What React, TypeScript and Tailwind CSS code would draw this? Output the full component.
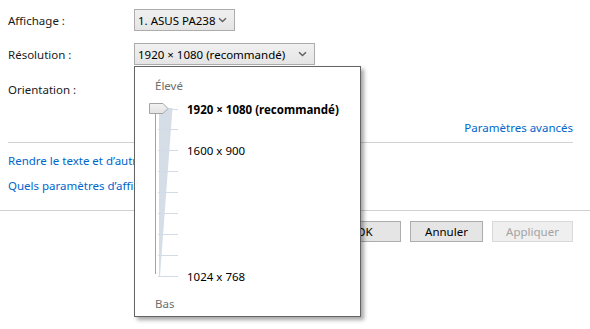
import React from "react";

const Chevron = () => (
  <svg width="9" height="6" viewBox="0 0 9 6" className="shrink-0">
    <path d="M1 1.2 L4.5 4.6 L8 1.2" fill="none" stroke="#606060" strokeWidth="1.4" />
  </svg>
);

const Select = ({ text, w }: { text: string; w: string }) => (
  <div
    className={`flex h-[22px] ${w} items-center justify-between whitespace-nowrap border border-[#acacac] bg-gradient-to-b from-[#f0f0f0] to-[#e5e5e5] pl-[3px] pr-[7px] text-[#000]`}
  >
    <span className="pt-[1px]">{text}</span>
    <Chevron />
  </div>
);

const Slider = () => {
  const ticks = Array.from({ length: 9 }, (_, i) => 7.5 + i * 20.9);
  return (
    <svg width="32" height="180" viewBox="0 0 32 180" className="shrink-0">
      <polygon points="12,7 25.5,7 13,175 12,175" fill="#d5dee7" />
      {ticks.map((y, i) => (
        <line key={i} x1="11" x2="31" y1={Math.round(y) + 0.5} y2={Math.round(y) + 0.5} stroke="#d3dce6" strokeWidth="1" />
      ))}
      <line x1="8.5" x2="8.5" y1="13" y2="173" stroke="#a2a2a2" strokeWidth="1" />
      <defs>
        <linearGradient id="th" x1="0" y1="0" x2="0" y2="1">
          <stop offset="0" stopColor="#f2f2f2" />
          <stop offset="1" stopColor="#e2e2e2" />
        </linearGradient>
      </defs>
      <path d="M2.5 2.5 H16 L21 7.5 L16 12.5 H2.5 Z" fill="url(#th)" stroke="#a4a4a4" strokeWidth="1" />
    </svg>
  );
};

export default function App() {
  return (
    <div
      className="relative h-[329px] w-[590px] overflow-hidden bg-white text-[11.5px] leading-[16px] text-[#1a1a1a]"
      style={{ fontFamily: '"Segoe UI", "Noto Sans", sans-serif' }}
    >
      <div className="flex flex-col pt-[9px]">
        <div className="flex items-center pl-[8px]">
          <span className="w-[126px] pt-[2px]">Affichage :</span>
          <Select text="1. ASUS PA238" w="w-[101px]" />
        </div>
        <div className="mt-[12px] flex items-center pl-[8px]">
          <span className="w-[126px] pt-[2px]">Résolution :</span>
          <Select text="1920 × 1080 (recommandé)" w="w-[181px]" />
        </div>
        <div className="mt-[12px] flex h-[22px] items-center pl-[8px]">
          <span className="w-[126px] pt-[3px]">Orientation :</span>
        </div>
        <div className="mt-[21px] flex justify-end pr-[17px] text-[#0066cc]">Paramètres avancés</div>
        <div className="ml-[8px] mr-[17px] mt-[6px] border-t border-[#d2d2d2]" />
        <div className="ml-[8px] mt-[10px] w-[126px] overflow-hidden whitespace-nowrap text-[#0066cc]">Rendre le texte et d’autres éléments plus grands ou plus petits</div>
        <div className="ml-[8px] mt-[9px] w-[126px] overflow-hidden whitespace-nowrap text-[#0066cc]">Quels paramètres d’affichage dois-je choisir ?</div>
        <div className="mt-[16px] border-t border-[#d2d2d2]" />
        <div className="mt-[10px] flex justify-end gap-[9px] pr-[17px]">
          <div className="flex h-[21px] w-[73px] items-center justify-center border border-[#adadad] bg-[#e5e5e5] text-[#000]">OK</div>
          <div className="flex h-[21px] w-[73px] items-center justify-center border border-[#adadad] bg-[#e5e5e5] text-[#000]">Annuler</div>
          <div className="flex h-[21px] w-[81px] items-center justify-center border border-[#d9d9d9] bg-[#efefef] text-[#a3a3a3]">Appliquer</div>
        </div>
      </div>

      <div className="absolute left-[134px] top-[66px] flex h-[251px] w-[227px] flex-col border border-[#646464] bg-white pl-[12px] pt-[11px] shadow-[3px_3px_4px_rgba(0,0,0,0.35)]">
        <span className="ml-[8px] text-[#6e6e6e]">Élevé</span>
        <div className="mt-[7px] flex">
          <Slider />
          <div className="ml-[8px] flex flex-col pt-[1px] text-[#000]">
            <span className="font-bold">1920 × 1080 (recommandé)</span>
            <span className="mt-[25px]">1600 x 900</span>
            <span className="mt-[110px]">1024 x 768</span>
          </div>
        </div>
        <span className="ml-[8px] mt-[11px] text-[#6e6e6e]">Bas</span>
      </div>
    </div>
  );
}
